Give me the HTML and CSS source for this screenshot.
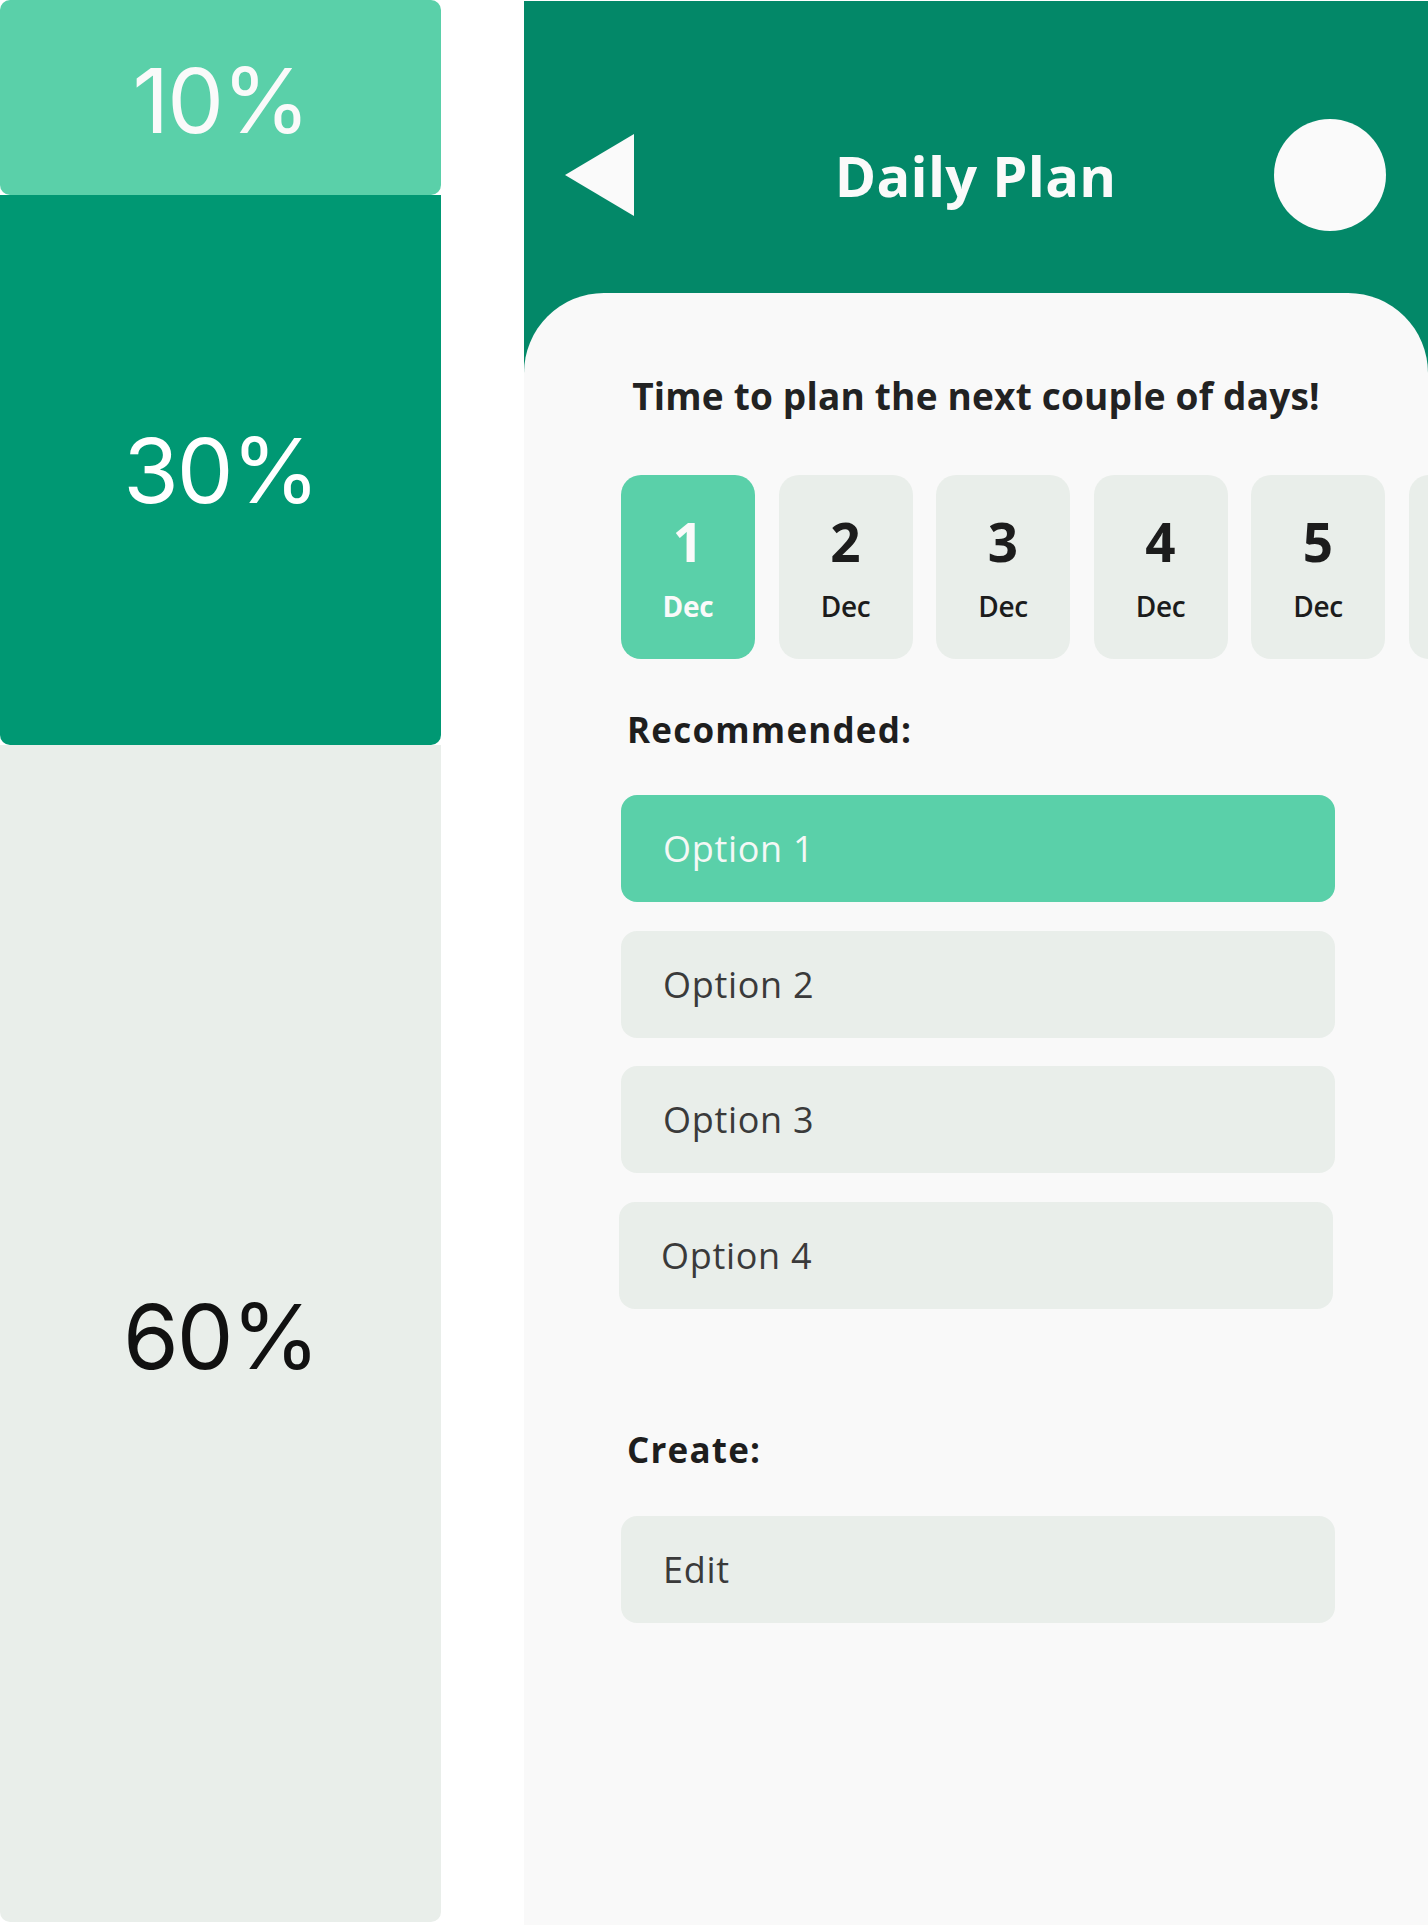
FILE: index.html
```html
<!DOCTYPE html>
<html lang="en">
<head>
<meta charset="utf-8">
<title>Daily Plan</title>
<link rel="stylesheet" href="styles.css">
</head>
<body>
<div class="page">
  <div class="palette">
    <div class="swatch swatch-10">10%</div>
    <div class="swatch swatch-30">30%</div>
    <div class="swatch swatch-60">60%</div>
  </div>

  <div class="phone">
    <header class="topbar">
      <svg class="back" width="69" height="82" viewBox="0 0 69 82" aria-hidden="true">
        <polygon points="0,41 69,0 69,82" fill="#fafafa"/>
      </svg>
      <h1 class="title">Daily Plan</h1>
      <div class="avatar"></div>
    </header>

    <main class="card">
      <p class="intro">Time to plan the next couple of days!</p>

      <div class="dates">
        <div class="date active"><span class="day">1</span><span class="mon">Dec</span></div>
        <div class="date"><span class="day">2</span><span class="mon">Dec</span></div>
        <div class="date"><span class="day">3</span><span class="mon">Dec</span></div>
        <div class="date"><span class="day">4</span><span class="mon">Dec</span></div>
        <div class="date"><span class="day">5</span><span class="mon">Dec</span></div>
        <div class="date date-peek" aria-hidden="true"></div>
      </div>

      <h2 class="label">Recommended:</h2>
      <div class="options">
        <div class="option active">Option 1</div>
        <div class="option">Option 2</div>
        <div class="option">Option 3</div>
        <div class="option option-shift">Option 4</div>
      </div>

      <h2 class="label label-create">Create:</h2>
      <div class="option">Edit</div>
    </main>
  </div>
</div>
</body>
</html>
```

FILE: styles.css
```css
* { box-sizing: border-box; }

html, body {
  margin: 0;
  padding: 0;
  background: #ffffff;
}

.page {
  display: flex;
  gap: 83px;
  width: 1428px;
  height: 1925px;
  overflow: hidden;
}

/* ---------- palette column ---------- */
.palette {
  width: 441px;
  height: 1922px;
  display: flex;
  flex-direction: column;
  flex-shrink: 0;
}

.swatch {
  display: flex;
  align-items: center;
  justify-content: center;
  font-family: Inter, "Liberation Sans", sans-serif;
  font-size: 90px;
  line-height: 1;
  font-weight: 400;
  letter-spacing: -2px;
}

.swatch-10 {
  height: 195px;
  background: #5ad0a9;
  color: #fafafa;
  border-radius: 10px;
  padding-top: 6px;
}

.swatch-30 {
  height: 550px;
  background: #009873;
  color: #ffffff;
  border-radius: 0 0 10px 10px;
  padding-top: 2px;
}

.swatch-60 {
  flex: 1;
  background: #e9eeea;
  color: #111111;
  border-radius: 0 0 10px 10px;
  padding-top: 6px;
}

/* ---------- phone ---------- */
.phone {
  width: 904px;
  flex-shrink: 0;
  margin-top: 1px;
  background: #038868;
  display: flex;
  flex-direction: column;
  overflow: hidden;
  font-family: "Open Sans", "Noto Sans", sans-serif;
}

.topbar {
  height: 292px;
  display: grid;
  grid-template-columns: 1fr auto 1fr;
  align-items: center;
  padding: 118px 42px 62px 41px;
}

.back {
  display: block;
  width: 69px;
  height: 82px;
  justify-self: start;
}

.title {
  margin: 0;
  color: #fafafa;
  font-size: 56px;
  font-weight: 700;
  line-height: 70px;
  letter-spacing: 0.3px;
}

.avatar {
  justify-self: end;
  width: 112px;
  height: 112px;
  border-radius: 50%;
  background: #fafafa;
}

.card {
  flex: 1;
  background: #f9f9f9;
  border-radius: 80px 80px 0 0;
  padding: 81px 0 0 97px;
}

.intro {
  margin: 0 0 0 -97px;
  text-align: center;
  font-size: 37px;
  line-height: 44px;
  font-weight: 700;
  color: #222222;
  letter-spacing: 0.2px;
}

.dates {
  display: flex;
  gap: 23.5px;
  margin-top: 57px;
}

.date {
  flex: 0 0 134px;
  height: 184px;
  border-radius: 20px;
  background: #e9eeea;
  display: flex;
  flex-direction: column;
  align-items: center;
  padding-top: 39px;
  color: #1c1c1c;
}

.date.active {
  background: #5ad0a9;
  color: #fafafa;
}

.day {
  font-size: 53px;
  line-height: 56px;
  font-weight: 700;
}

.mon {
  margin-top: 20px;
  font-size: 28px;
  line-height: 32px;
  font-weight: 600;
  letter-spacing: -0.3px;
}

.date.active .mon { font-weight: 700; }

.label {
  margin: 51px 0 45px 6px;
  font-size: 35px;
  line-height: 40px;
  font-weight: 700;
  color: #1e1e1e;
  letter-spacing: 1.2px;
}

.label-create {
  margin-top: 121px;
  margin-bottom: 46px;
}

.options {
  display: flex;
  flex-direction: column;
  gap: 28.7px;
}

.option {
  width: 714px;
  height: 107px;
  border-radius: 16px;
  background: #e9eeea;
  padding-left: 42px;
  font-size: 36px;
  line-height: 107px;
  font-weight: 400;
  color: #3a3a3a;
  letter-spacing: 0.7px;
}

.option-shift {
  margin-left: -2px;
}

.option.active {
  background: #5ad0a9;
  color: #f4f8f6;
}
```
